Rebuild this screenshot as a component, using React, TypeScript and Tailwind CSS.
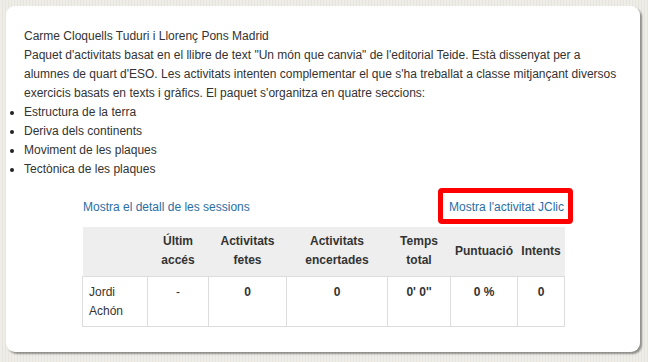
import React from 'react';

const topics = [
  'Estructura de la terra',
  'Deriva dels continents',
  'Moviment de les plaques',
  'Tectònica de les plaques',
];

const columns = [
  { label: ['', ''], width: 65 },
  { label: ['Últim', 'accés'], width: 61 },
  { label: ['Activitats', 'fetes'], width: 78 },
  { label: ['Activitats', 'encertades'], width: 101 },
  { label: ['Temps', 'total'], width: 63 },
  { label: ['Puntuació'], width: 67 },
  { label: ['Intents'], width: 47 },
];

const values = ['-', '0', '0', "0' 0''", '0 %', '0'];

const App = () => {
  return (
    <div
      className="w-[648px] h-[362px] pt-[6px] pl-[6px] bg-[#eeece6] bg-[repeating-linear-gradient(90deg,#efede7_0px,#efede7_2px,#e6e4dd_2px,#e6e4dd_3px)] text-[12px] leading-[19px] text-[#333]"
      style={{ fontFamily: '"Liberation Sans", Arial, sans-serif' }}
    >
      <div className="w-[634px] h-[346px] bg-white rounded-[9px] shadow-[2px_2px_2px_rgba(0,0,0,0.4)] pt-[21px] pl-[18px] pr-[15px]">
        <p>Carme Cloquells Tuduri i Llorenç Pons Madrid</p>
        <p>
          Paquet d'activitats basat en el llibre de text "Un món que canvia" de l'editorial Teide. Està
          dissenyat per a alumnes de quart d'ESO. Les activitats intenten complementar el que s'ha
          treballat a classe mitjançant diversos exercicis basats en texts i gràfics. El paquet
          s'organitza en quatre seccions:
        </p>
        <ul className="list-disc list-outside marker:text-[#222]">
          {topics.map((t) => (
            <li key={t}>{t}</li>
          ))}
        </ul>

        {/* Links + table, centred in the card */}
        <div className="w-[482px] ml-[58px] mt-[19px]">
          <div className="flex justify-between pl-px">
            <a className="text-[#2a6ea6] cursor-pointer">Mostra el detall de les sessions</a>
            <span className="relative">
              <a className="text-[#2a6ea6] cursor-pointer">Mostra l'activitat JClic</a>
              <span className="absolute left-[-11px] right-[-9px] top-[-10px] bottom-[-7px] border-[5px] border-[#ff0000] rounded-[4px]" />
            </span>
          </div>

          <table className="table-fixed w-[482px] mt-[10px] border-collapse">
            <colgroup>
              {columns.map((c, i) => (
                <col key={i} style={{ width: c.width }} />
              ))}
            </colgroup>
            <thead>
              <tr className="bg-[#eeeeee] h-[49px]">
                {columns.map((c, i) => (
                  <th key={i} className="font-bold text-center align-middle px-0 py-[5px]">
                    {c.label.map((l, j) => (
                      <div key={j}>{l}</div>
                    ))}
                  </th>
                ))}
              </tr>
            </thead>
            <tbody>
              <tr className="h-[50px]">
                <td className="border border-[#dddddd] align-top text-left px-[6px] pt-[6px]">
                  Jordi
                  <br />
                  Achón
                </td>
                {values.map((v, i) => (
                  <td
                    key={i}
                    className={`border border-[#dddddd] align-top text-center pt-[6px] ${i === 0 ? '' : 'font-bold'}`}
                  >
                    {v}
                  </td>
                ))}
              </tr>
            </tbody>
          </table>
        </div>
      </div>
    </div>
  );
};

export default App;
